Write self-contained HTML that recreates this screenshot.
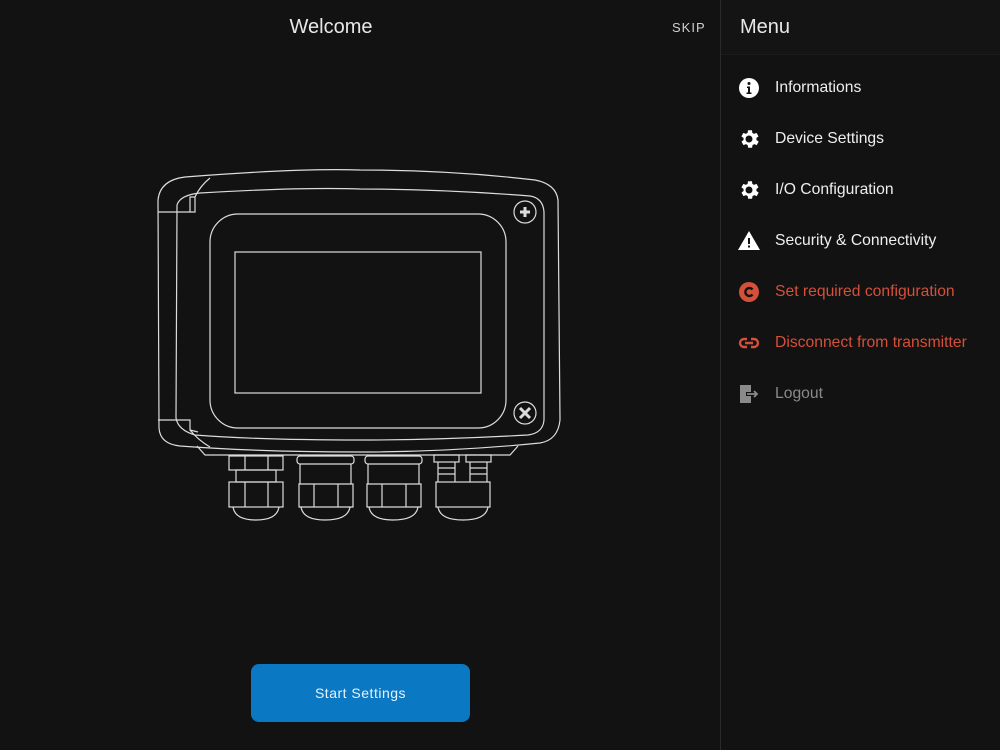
<!DOCTYPE html>
<html><head><style>
html,body{margin:0;padding:0;width:1000px;height:750px;background:#121212;overflow:hidden;font-family:"Liberation Sans",sans-serif}
.title{position:absolute;left:0;width:662px;top:16px;text-align:center;color:#e8e8e8;font-size:20px}
.skip{position:absolute;left:672px;top:20px;color:#cfcfcf;font-size:13px;letter-spacing:1px}
.side{position:absolute;left:720px;top:0;width:280px;height:750px;border-left:1px solid #2a2a2a;background:#121212}
.sh{height:54px;background:#141414;border-bottom:1px solid #1c1c1c;color:#e8e8e8;font-size:20px;line-height:55px;padding-left:19px}
.it{position:absolute;left:16px;height:24px;display:flex;align-items:center;font-size:15.7px;color:#eee;white-space:nowrap}
.it svg{width:24px;height:24px;flex-shrink:0;margin-right:14px}
.red{color:#d4503a}.gray{color:#8a8a8a}
.btn{position:absolute;left:251px;top:664px;width:219px;height:58px;background:#0a78c2;border-radius:8px;color:#e8f2fa;font-size:14px;text-align:center;line-height:58px;letter-spacing:.5px}
</style></head><body>
<div class="title">Welcome</div>
<div class="skip">SKIP</div>
<svg style="position:absolute;left:0;top:0" width="720" height="750" fill="none" stroke="#dcdcdc" stroke-width="1.2">
<path d="M185 177 Q300 168 360 170 Q450 170 535 180 Q556 184 558 200 L560 420 Q558 440 540 443 Q450 452 360 452 Q260 452 180 446 Q160 444 159 428 L158 200 Q160 180 185 177Z"/>
<path d="M200 193 Q300 187 360 189 Q440 189 530 196 Q543 198 544 212 L544 420 Q543 433 528 435 Q440 440 360 440 Q260 440 195 435 Q178 430 176 418 L177 205 Q180 195 200 193Z"/>
<path d="M210 178 Q200 186 195 197 M158 212 L195 212 L195 197 L190 197 L190 212"/>
<path d="M158 420 L190 420 L190 430 L198 432 M190 430 Q198 440 210 447"/>
<rect x="210" y="214" width="296" height="214" rx="28"/>
<rect x="235" y="252" width="246" height="141"/>
<circle cx="525" cy="212" r="11"/><circle cx="525" cy="413" r="11"/>
<path d="M520 212h10M525 207v10M520 408l10 10M530 408l-10 10" stroke-width="3"/>
<path d="M197 446 L205 455 L510 455 L518 446"/>
<g>
<rect x="229" y="456" width="54" height="14"/><rect x="236" y="470" width="40" height="12"/>
<rect x="229" y="482" width="54" height="25"/><path d="M233 507 Q235 520 256 520 Q277 520 279 507"/>
<path d="M245 456v14M268 456v14M245 482v25M268 482v25"/>
</g>
<g transform="translate(68,0)">
<rect x="229" y="456" width="57" height="8" rx="3"/><path d="M232 464v20h51v-20M231 484h54v23h-54z"/><path d="M233 507 Q235 520 257 520 Q280 520 282 507M246 484v23M270 484v23"/>
</g>
<g transform="translate(136,0)">
<rect x="229" y="456" width="57" height="8" rx="3"/><path d="M232 464v20h51v-20M231 484h54v23h-54z"/><path d="M233 507 Q235 520 257 520 Q280 520 282 507M246 484v23M270 484v23"/>
</g>
<rect x="434" y="455" width="25" height="7"/><rect x="466" y="455" width="25" height="7"/>
<path d="M438 462v20M455 462v20M470 462v20M487 462v20M438 468h17M438 474h17M470 468h17M470 474h17"/>
<rect x="436" y="482" width="54" height="25"/><path d="M438 507 Q440 520 463 520 Q486 520 488 507"/>
</svg>
<div class="side">
<div class="sh">Menu</div>
<div class="it" style="top:76px"><svg viewBox="0 0 24 24"><circle cx="12" cy="12" r="10" fill="#fff"/><circle cx="12" cy="7.5" r="1.5" fill="#121212"/><path d="M10 10.5h3v6h1.5v1.5h-5v-1.5H11v-4.5h-1z" fill="#121212"/></svg>Informations</div>
<div class="it" style="top:127px"><svg viewBox="0 0 24 24"><path fill="#fff" d="M19.4 13a7.5 7.5 0 000-2l2.1-1.6-2-3.5-2.5 1a7.6 7.6 0 00-1.7-1L15 3.2h-4l-.4 2.7a7.6 7.6 0 00-1.7 1l-2.5-1-2 3.5L6.6 11a7.5 7.5 0 000 2l-2.1 1.6 2 3.5 2.5-1c.5.4 1.1.7 1.7 1l.4 2.7h4l.4-2.7c.6-.3 1.2-.6 1.7-1l2.5 1 2-3.5zM12 15.5a3.5 3.5 0 110-7 3.5 3.5 0 010 7z"/></svg>Device Settings</div>
<div class="it" style="top:178px"><svg viewBox="0 0 24 24"><path fill="#fff" d="M19.4 13a7.5 7.5 0 000-2l2.1-1.6-2-3.5-2.5 1a7.6 7.6 0 00-1.7-1L15 3.2h-4l-.4 2.7a7.6 7.6 0 00-1.7 1l-2.5-1-2 3.5L6.6 11a7.5 7.5 0 000 2l-2.1 1.6 2 3.5 2.5-1c.5.4 1.1.7 1.7 1l.4 2.7h4l.4-2.7c.6-.3 1.2-.6 1.7-1l2.5 1 2-3.5zM12 15.5a3.5 3.5 0 110-7 3.5 3.5 0 010 7z"/></svg>I/O Configuration</div>
<div class="it" style="top:229px"><svg viewBox="0 0 24 24"><path fill="#fff" d="M12 2L1 21h22z"/><path fill="#121212" d="M11 9h2v6h-2zM11 16.5h2v2h-2z"/></svg>Security &amp; Connectivity</div>
<div class="it red" style="top:280px"><svg viewBox="0 0 24 24"><circle cx="12" cy="12" r="10" fill="#d4503a"/><path d="M15.5 9.5A4 4 0 1015.5 14.5" stroke="#121212" stroke-width="2.4" fill="none"/></svg>Set required configuration</div>
<div class="it red" style="top:331px"><svg viewBox="0 0 24 24"><path d="M10 8H7a4 4 0 000 8h3M14 8h3a4 4 0 010 8h-3M8 12h8" stroke="#d4503a" stroke-width="2.4" fill="none"/></svg>Disconnect from transmitter</div>
<div class="it gray" style="top:382px"><svg viewBox="0 0 24 24"><path fill="#8a8a8a" d="M3 3h11v7H9v4h5v7H3z"/><path d="M10 12h10M17 9l3 3-3 3" stroke="#8a8a8a" stroke-width="1.8" fill="none"/></svg>Logout</div>
</div>
<div class="btn">Start Settings</div>
</body></html>
